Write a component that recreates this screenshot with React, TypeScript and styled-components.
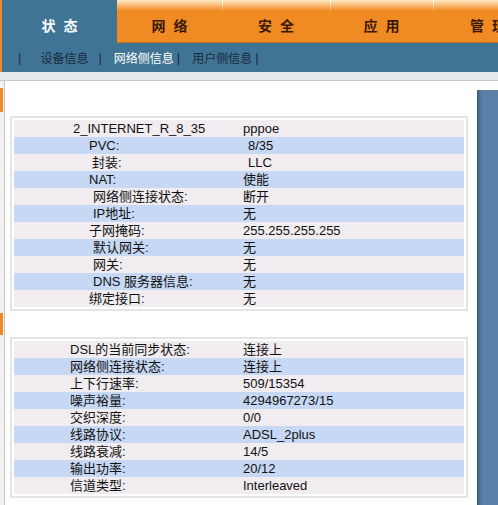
import React from "react";
import styled, { createGlobalStyle } from "styled-components";

const Global = createGlobalStyle`
  html, body { margin: 0; padding: 0; background: #ffffff; }
  body { font-family: "Liberation Sans", "Noto Sans CJK SC", sans-serif; }
`;

const Page = styled.div`
  width: 498px;
  height: 505px;
  overflow: hidden;
  background: #ffffff;
  display: flex;
  flex-direction: column;
`;

const Header = styled.div`
  border-left: 2px solid #e8892c;
  display: flex;
  flex-direction: column;
`;

const TabBar = styled.div`
  display: flex;
  height: 43px;
  background: #3f7494;
  overflow: hidden;
`;

const Tab = styled.div<{ $w: number; $active?: boolean; $divider?: boolean }>`
  flex: 0 0 ${(p) => p.$w}px;
  box-sizing: border-box;
  display: flex;
  align-items: center;
  justify-content: center;
  padding-top: 7px;
  font-family: "Noto Sans CJK SC", sans-serif;
  font-size: 14px;
  font-weight: 700;
  letter-spacing: 8px;
  text-indent: 8px;
  white-space: nowrap;
  color: ${(p) => (p.$active ? "#ffffff" : "#3a1808")};
  background: ${(p) =>
    p.$active
      ? "#3f7494"
      : `${
          p.$divider
            ? "linear-gradient(to bottom, rgba(255,255,255,0.85), rgba(255,255,255,0) 13px) left top / 1px 13px no-repeat, "
            : ""
        }linear-gradient(to bottom, #fde6c6 0px, #fbc887 4px, #f6a04a 8px, #f08a22 11px, #f08a22 100%)`};
  box-shadow: ${(p) => (p.$active ? "none" : "inset 0 -1px 0 #c9701f")};
`;

const SubNav = styled.div`
  height: 29px;
  background: #3f7494;
  display: flex;
  align-items: center;
  padding-left: 16px;
  font-family: "Noto Sans CJK SC", sans-serif;
  font-size: 12px;
  color: #1a2a3e;
`;

const Sep = styled.span<{ $r: number }>`
  margin-right: ${(p) => p.$r}px;
  font-family: "Liberation Sans", sans-serif;
  font-size: 13px;
`;

const NavLink = styled.span<{ $active?: boolean; $r: number }>`
  color: ${(p) => (p.$active ? "#ffffff" : "#1a2a3e")};
  margin-right: ${(p) => p.$r}px;
`;

const Band = styled.div`
  height: 8px;
  background: #e6e9ec;
  border-bottom: 1px solid #c3c7cb;
`;

const Body = styled.div`
  flex: 1;
  display: flex;
  align-items: stretch;
`;

const Rail = styled.div`
  width: 4px;
  background: #f2f2f2;
  border-right: 1px solid #c4c4c4;
  display: flex;
  flex-direction: column;
`;

const Marker = styled.div<{ $top: number; $h: number }>`
  margin-top: ${(p) => p.$top}px;
  height: ${(p) => p.$h}px;
  width: 3px;
  background: #f0882a;
`;

const Main = styled.div`
  flex: 1;
  padding: 35px 9px 0 5px;
  display: flex;
  flex-direction: column;
  gap: 26px;
`;

const RightRail = styled.div`
  width: 21px;
  margin-top: 9px;
  background: linear-gradient(to right, #3a5a7a 0px, #4c749c 3px, #5a80a8 6px, #5a80a8 100%);
`;

const Panel = styled.div`
  border: 2px solid #e4e4e4;
  padding: 2px;
  background: #ffffff;
`;

const Row = styled.div<{ $alt: boolean }>`
  display: grid;
  grid-template-columns: 229px 1fr;
  height: 17px;
  line-height: 17px;
  background: ${(p) => (p.$alt ? "#c6d8f4" : "#f0ecef")};
  font-family: "Liberation Sans", "Noto Sans CJK SC", sans-serif;
  font-size: 13px;
  color: #111111;
  white-space: nowrap;
`;

const Label = styled.span<{ $indent: number }>`
  padding-left: ${(p) => p.$indent}px;
`;

const Value = styled.span<{ $shift?: number }>`
  padding-left: ${(p) => p.$shift ?? 0}px;
`;

type Item = { label: string; value: string; indent: number; shift?: number };

const wanRows: Item[] = [
  { label: "2_INTERNET_R_8_35", value: "pppoe", indent: 59 },
  { label: "PVC:", value: "8/35", indent: 75, shift: 5 },
  { label: "封装:", value: "LLC", indent: 78, shift: 5 },
  { label: "NAT:", value: "使能", indent: 75 },
  { label: "网络侧连接状态:", value: "断开", indent: 79 },
  { label: "IP地址:", value: "无", indent: 79 },
  { label: "子网掩码:", value: "255.255.255.255", indent: 75 },
  { label: "默认网关:", value: "无", indent: 79 },
  { label: "网关:", value: "无", indent: 79 },
  { label: "DNS 服务器信息:", value: "无", indent: 79 },
  { label: "绑定接口:", value: "无", indent: 75 },
];

const dslRows: Item[] = [
  { label: "DSL的当前同步状态:", value: "连接上", indent: 56 },
  { label: "网络侧连接状态:", value: "连接上", indent: 56 },
  { label: "上下行速率:", value: "509/15354", indent: 56 },
  { label: "噪声裕量:", value: "4294967273/15", indent: 56 },
  { label: "交织深度:", value: "0/0", indent: 56 },
  { label: "线路协议:", value: "ADSL_2plus", indent: 56 },
  { label: "线路衰减:", value: "14/5", indent: 56 },
  { label: "输出功率:", value: "20/12", indent: 56 },
  { label: "信道类型:", value: "Interleaved", indent: 56 },
];

const tabs = [
  { name: "状态", w: 115, active: true },
  { name: "网络", w: 105 },
  { name: "安全", w: 108 },
  { name: "应用", w: 103 },
  { name: "管理", w: 110 },
];

function InfoPanel({ rows }: { rows: Item[] }) {
  return (
    <Panel>
      {rows.map((r, i) => (
        <Row key={i} $alt={i % 2 === 1}>
          <Label $indent={r.indent}>{r.label}</Label>
          <Value $shift={r.shift}>{r.value}</Value>
        </Row>
      ))}
    </Panel>
  );
}

export default function App() {
  return (
    <>
      <Global />
      <Page>
        <Header>
          <TabBar>
            {tabs.map((t, i) => (
              <Tab key={t.name} $w={t.w} $active={t.active} $divider={i > 1}>
                {t.name}
              </Tab>
            ))}
          </TabBar>
          <SubNav>
            <Sep $r={19}>|</Sep>
            <NavLink $r={10}>设备信息</NavLink>
            <Sep $r={12}>|</Sep>
            <NavLink $active $r={3}>网络侧信息</NavLink>
            <Sep $r={12}>|</Sep>
            <NavLink $r={3}>用户侧信息</NavLink>
            <Sep $r={0}>|</Sep>
          </SubNav>
        </Header>
        <Band />
        <Body>
          <Rail>
            <Marker $top={7} $h={24} />
            <Marker $top={201} $h={22} />
          </Rail>
          <Main>
            <InfoPanel rows={wanRows} />
            <InfoPanel rows={dslRows} />
          </Main>
          <RightRail />
        </Body>
      </Page>
    </>
  );
}
